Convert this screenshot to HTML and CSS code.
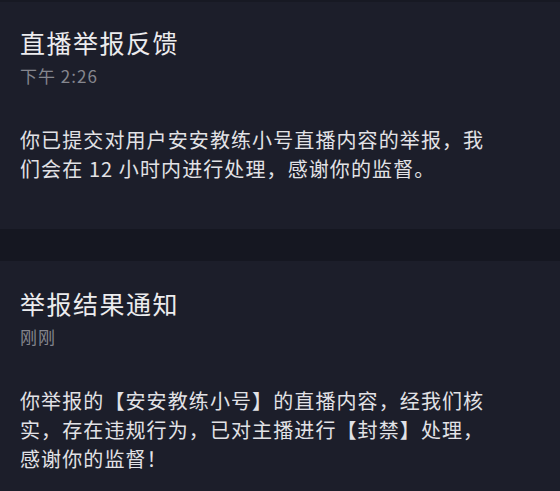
FILE: index.html
```html
<!DOCTYPE html>
<html lang="zh-CN">
<head>
<meta charset="utf-8">
<link rel="stylesheet" href="styles.css">
</head>
<body>
<div class="page">
  <section class="card card-first">
    <h2 class="title">直播举报反馈</h2>
    <div class="time">下午 2:26</div>
    <p class="body">你已提交对用户安安教练小号直播内容的举报，我们会在 12 小时内进行处理，感谢你的监督。</p>
  </section>
  <div class="gap"></div>
  <section class="card card-last">
    <h2 class="title">举报结果通知</h2>
    <div class="time">刚刚</div>
    <p class="body">你举报的【安安教练小号】的直播内容，经我们核实，存在违规行为，已对主播进行【封禁】处理，感谢你的监督！</p>
  </section>
</div>
</body>
</html>
```
FILE: styles.css
```css
html, body {
  margin: 0;
  padding: 0;
  background: #1c1e2a;
}
body {
  width: 560px;
  height: 491px;
  overflow: hidden;
  font-family: "Noto Sans CJK SC", "Noto Sans", sans-serif;
}
.page {
  display: flex;
  flex-direction: column;
}
.card {
  background: #1c1e2a;
  padding: 26px 20px 46px 20px;
}
.card-first {
  border-top: 2px solid #171923;
  padding-top: 24px;
}
.card-last {
  padding-bottom: 0;
}
.gap {
  height: 32px;
  background: #151721;
}
.title {
  margin: 0;
  font-size: 25px;
  font-weight: 400;
  line-height: 32px;
  letter-spacing: 1.5px;
  color: #ececee;
}
.time {
  margin-top: 7px;
  font-size: 17px;
  line-height: 22px;
  letter-spacing: 1px;
  color: #85868e;
}
.body {
  margin: 38px 0 0 0;
  width: 474px;
  font-size: 20px;
  line-height: 29px;
  letter-spacing: 1.1px;
  color: #e2e2e6;
}
```
